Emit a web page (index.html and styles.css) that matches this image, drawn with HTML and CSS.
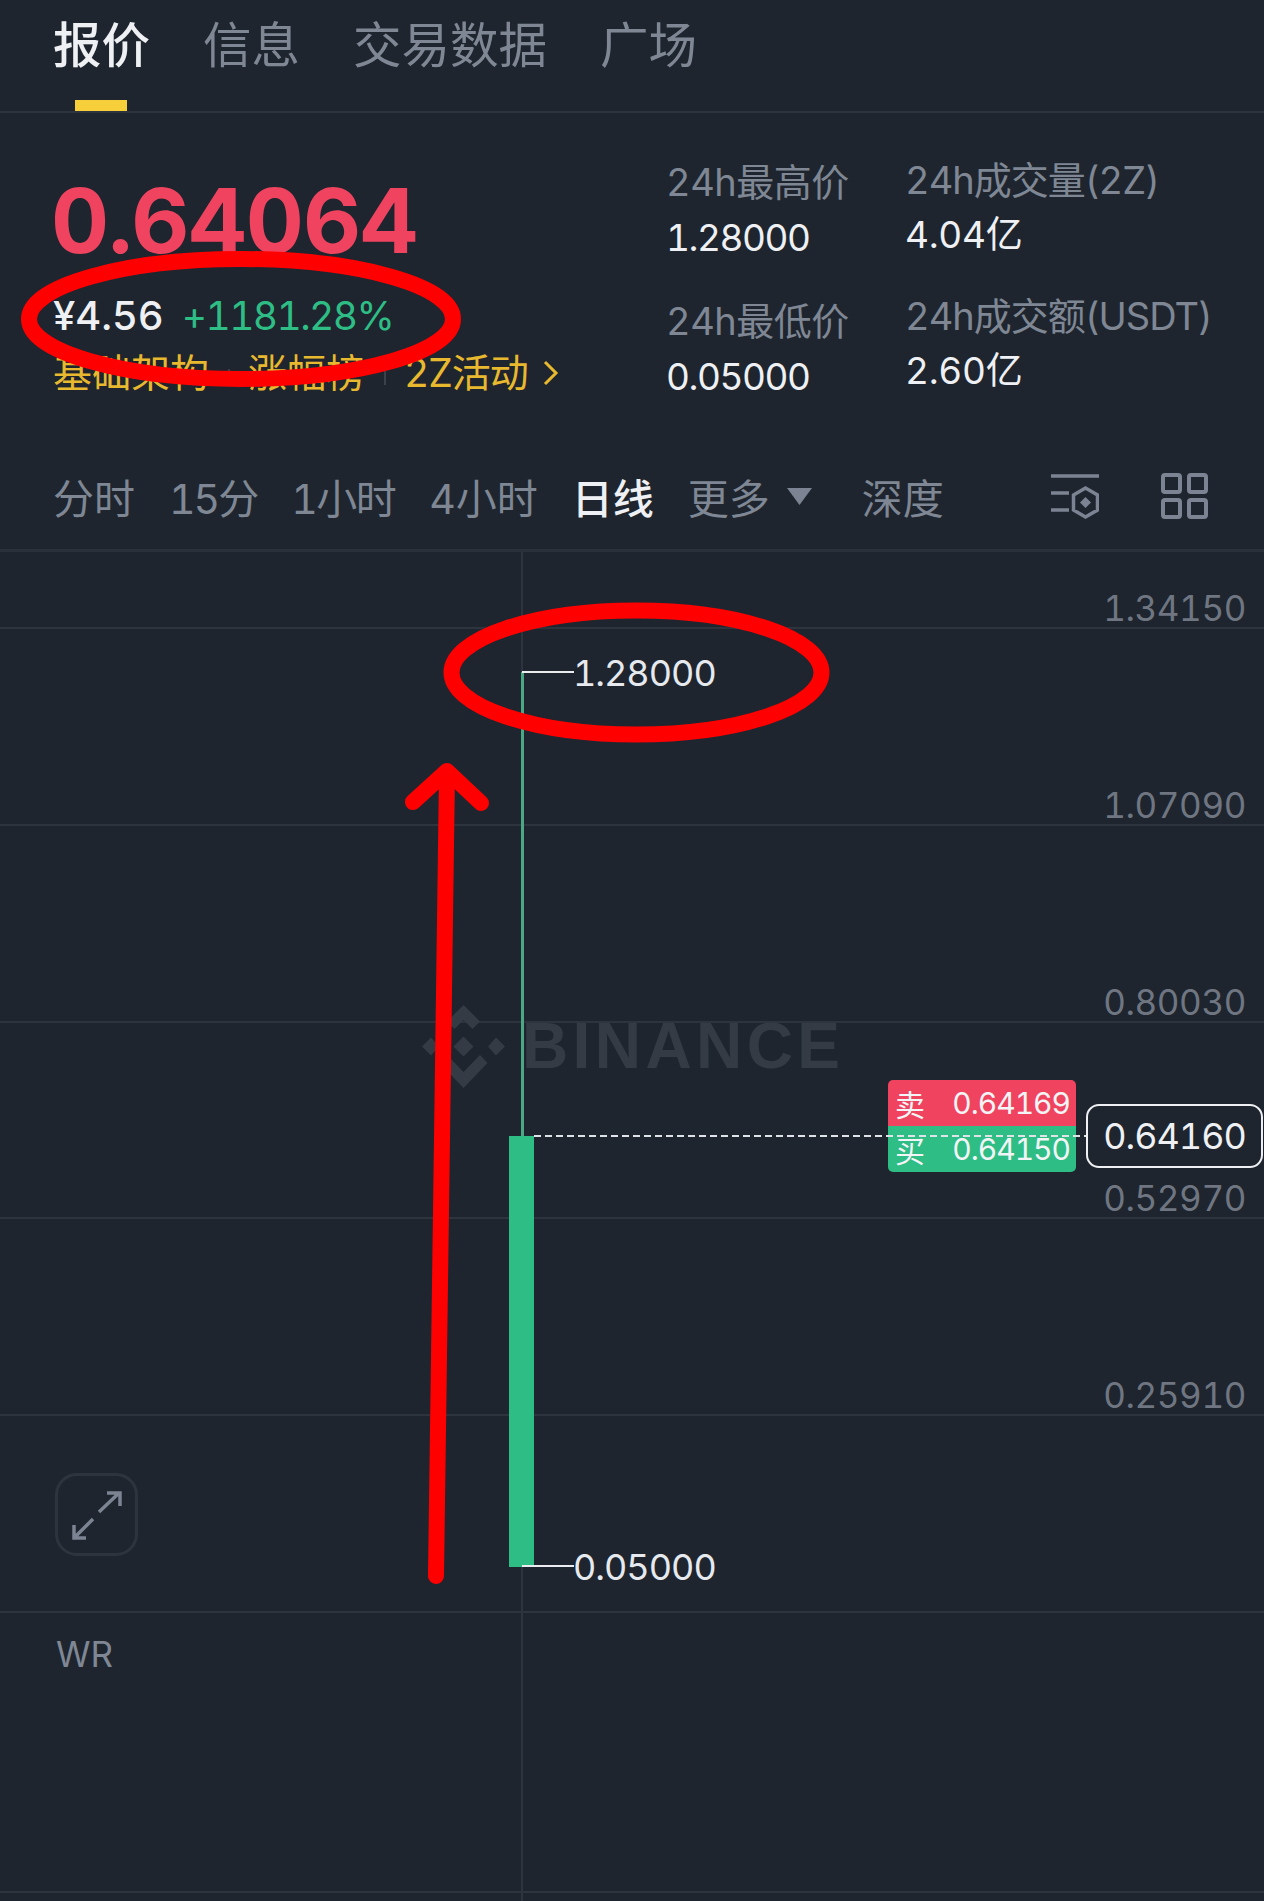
FILE: index.html
```html
<!DOCTYPE html>
<html lang="zh-CN">
<head>
<meta charset="utf-8">
<title>ZZ/USDT</title>
<link rel="stylesheet" href="styles.css">
</head>
<body>
<main class="page">
  <nav class="tabs">
    <a class="tab tab-active">报价</a>
    <a class="tab">信息</a>
    <a class="tab">交易数据</a>
    <a class="tab">广场</a>
  </nav>

  <section class="quote">
    <div class="quote-main">
      <div class="price">0.64064</div>
      <div class="sub"><span class="cny">¥4.56</span><span class="change">+1181.28%</span></div>
      <div class="links">
        <span>基础架构</span><i class="sep"></i><span>涨幅榜</span><i class="sep"></i><span class="link-2z">2Z活动</span>
        <svg class="chev" width="16" height="26" viewBox="0 0 16 26"><path d="M2 2l11 11L2 24" fill="none" stroke="#e8b92f" stroke-width="3"/></svg>
      </div>
    </div>
    <div class="stats stats-a">
      <div class="stat"><div class="stat-label">24h最高价</div><div class="stat-value">1.28000</div></div>
      <div class="stat"><div class="stat-label">24h最低价</div><div class="stat-value">0.05000</div></div>
    </div>
    <div class="stats stats-b">
      <div class="stat"><div class="stat-label">24h成交量(2Z)</div><div class="stat-value">4.04亿</div></div>
      <div class="stat"><div class="stat-label">24h成交额(USDT)</div><div class="stat-value">2.60亿</div></div>
    </div>
  </section>

  <div class="toolbar">
    <span class="tf">分时</span>
    <span class="tf tf-15">15分</span>
    <span class="tf tf-1h">1小时</span>
    <span class="tf">4小时</span>
    <span class="tf tf-active">日线</span>
    <span class="tf tf-more">更多<svg class="caret" width="25" height="17" viewBox="0 0 25 17"><path d="M0 0h25L12.500 17z" fill="#7c8494"/></svg></span>
    <span class="tf">深度</span>
    <span class="tools">
      <svg class="tool" width="48" height="46" viewBox="0 0 48 46" fill="none" stroke="#7c8494" stroke-width="3.500"><path d="M0 3h48M0 20h18M0 37h18"/><path d="M34.500 15l12 7v15l-12 7-12-7V22z"/><path d="M34.500 24l5.500 5.500-5.500 5.500-5.500-5.500z" fill="#7c8494" stroke="none"/></svg>
      <svg class="tool" width="47" height="46" viewBox="0 0 47 46" fill="none" stroke="#7c8494" stroke-width="4"><rect x="2" y="2" width="17" height="17" rx="2"/><rect x="28" y="2" width="17" height="17" rx="2"/><rect x="2" y="27" width="17" height="17" rx="2"/><rect x="28" y="27" width="17" height="17" rx="2"/></svg>
    </span>
  </div>

  <section class="chart">
    <div class="rows">
      <div class="row row-first"><span class="axis">1.34150</span></div>
      <div class="row"><span class="axis">1.07090</span></div>
      <div class="row"><span class="axis">0.80030</span></div>
      <div class="row"><span class="axis">0.52970</span></div>
      <div class="row"><span class="axis">0.25910</span></div>
      <div class="row"></div>
      <div class="row row-last"><span class="wr">WR</span></div>
    </div>

    <div class="crossline"></div>

    <div class="watermark">
      <svg width="83" height="83" viewBox="0 0 83 83" fill="#343b45"><path d="M41.500 0L58 16.500 50.500 24 41.500 15 32.500 24 25 16.500zM9 32.500l8 9-8 9-9-9zM74 32.500l9 9-9 9-8-9zM41.500 31.500l10 10-10 10-10-10zM25 50l16.500 17L58 50l7.500 8L41.500 83 17.500 58z"/></svg>
      <span class="wm-text">BINANCE</span>
    </div>

    <div class="wick"></div>
    <div class="candle"></div>
    <div class="lead lead-high"></div>
    <div class="extreme extreme-high">1.28000</div>
    <div class="lead lead-low"></div>
    <div class="extreme extreme-low">0.05000</div>

    <div class="book">
      <div class="book-row book-sell"><span>卖</span><span>0.64169</span></div>
      <div class="book-row book-buy"><span>买</span><span>0.64150</span></div>
    </div>
    <div class="dash"></div>
    <div class="last">0.64160</div>

    <div class="expand">
      <svg width="50" height="50" viewBox="0 0 50 50" fill="none" stroke="#7c8494" stroke-width="3.500"><path d="M27 22L47 3M35 3h13v13"/><path d="M21 29L2 48M14 48H2V35"/></svg>
    </div>
  </section>

  <svg class="marks" width="1264" height="1901" viewBox="0 0 1264 1901" fill="none" stroke="#ff0000" stroke-width="16" stroke-linecap="round" stroke-linejoin="round">
    <ellipse cx="241" cy="319" rx="212" ry="60"/>
    <ellipse cx="636.500" cy="672.500" rx="185" ry="62"/>
    <path d="M436 1576L447 773"/>
    <path d="M413 802L447 771 481 803"/>
  </svg>
</main>
</body>
</html>
```

FILE: styles.css
```css
* { box-sizing: border-box; }
html, body { margin: 0; padding: 0; }
body {
  width: 1264px;
  height: 1901px;
  overflow: hidden;
  background: #1e252e;
  color: #eaecef;
  font-family: Inter, "Noto Sans CJK SC", sans-serif;
  font-variant-numeric: tabular-nums;
}
.page { position: relative; width: 1264px; height: 1901px; overflow: hidden; }

/* tabs */
.tabs {
  display: flex;
  gap: 53px;
  height: 113px;
  padding: 18px 0 0 53px;
  border-bottom: 2px solid #2d343e;
  font-size: 48.500px;
  line-height: 56px;
}
.tab { color: #7f8794; position: relative; height: 93px; }
.tab-active { color: #eef0f3; font-weight: 500; }
.tab-active::after {
  content: "";
  position: absolute;
  left: 22px;
  top: 82px;
  width: 52px;
  height: 11px;
  background: #f6cf3a;
}

/* quote */
.quote { display: flex; height: 327px; padding: 0 0 0 53px; }
.quote-main { width: 613px; padding-top: 63px; }
.price {
  font-size: 90px;
  font-weight: 700;
  line-height: 90px;
  color: #f0435f;
  letter-spacing: -1px;
  margin-left: -2px;
}
.sub { display: flex; gap: 18px; align-items: baseline; margin-top: 26px; font-size: 39px; line-height: 48px; }
.cny { color: #eef0f3; font-weight: 500; font-size: 40px; }
.change { color: #2ebd85; letter-spacing: -1.600px; }
.links { display: flex; align-items: center; margin-top: 8px; font-size: 39px; line-height: 50px; color: #e8b92f; }
.sep { display: block; width: 2px; height: 16px; margin: 8px 18.500px 0; background: #3a414b; }
.link-2z { letter-spacing: -1px; }
.chev { margin-left: 15px; }

.stats { display: flex; flex-direction: column; }
.stats-a { width: 239px; padding-top: 46px; gap: 37px; }
.stats-b { padding-top: 44px; gap: 35px; }
.stat-label { font-size: 38px; line-height: 46px; color: #7f8794; white-space: nowrap; }
.stat-value { font-size: 37px; line-height: 46px; margin-top: 10px; color: #eef0f3; }
.stats-a .stat-label { letter-spacing: -0.500px; }
.stats-a .stat-value { letter-spacing: -1.500px; }
.stats-b .stat-label { letter-spacing: -1px; }
.stats-b .stat-value { letter-spacing: -0.300px; margin-top: 9px; }

/* toolbar */
.toolbar {
  display: flex;
  align-items: center;
  height: 112px;
  padding: 3px 0 0 53px;
  border-bottom: 3px solid #2a313b;
  font-size: 41px;
  color: #7f8794;
}
.tf { margin-right: 34px; white-space: nowrap; }
.tf-15 { letter-spacing: -2px; }
.tf-1h { letter-spacing: -1.500px; }
.tf-active { color: #eef0f3; font-weight: 500; }
.tf-more { display: flex; align-items: center; margin-right: 50px; }
.caret { margin-left: 17px; }
.tools { display: flex; gap: 62px; margin-left: 73px; }

/* chart */
.chart { position: relative; height: 1349px; }
.rows { display: flex; flex-direction: column; }
.row {
  display: flex;
  justify-content: flex-end;
  align-items: flex-end;
  height: 196.800px;
  padding: 0 18px 2px 56px;
  border-bottom: 2px solid #2d343e;
}
.row-first { height: 77px; }
.row-last { height: 280px; justify-content: flex-start; align-items: flex-start; }
.axis { font-size: 35px; line-height: 34px; letter-spacing: -0.400px; color: #6f7682; }
.wr { font-size: 35px; line-height: 44px; margin-top: 19px; color: #7f8794; }

.crossline { position: absolute; left: 521px; top: 0; bottom: 0; width: 2px; background: #2d343e; }

.watermark { position: absolute; left: 422px; top: 453px; display: flex; align-items: center; gap: 17px; }
.wm-text { font-family: "Liberation Sans", sans-serif; font-size: 64px; font-weight: 700; line-height: 83px; letter-spacing: 4.400px; color: #343b45; }

.wick { position: absolute; left: 521px; top: 120px; width: 2.500px; height: 464px; background: #4aa985; }
.candle { position: absolute; left: 509px; top: 584px; width: 25px; height: 431px; background: #2ebd85; }
.lead { position: absolute; left: 522px; width: 52px; height: 2px; background: #eaecef; }
.lead-high { top: 119px; }
.lead-low { top: 1013px; }
.extreme { position: absolute; left: 573px; font-size: 36px; line-height: 44px; letter-spacing: -1px; color: #e6e9ee; }
.extreme-high { top: 99px; }
.extreme-low { top: 993px; }

.dash {
  position: absolute;
  left: 534px;
  top: 583px;
  width: 554px;
  height: 2px;
  background: repeating-linear-gradient(90deg, #dfe3e8 0 7px, transparent 7px 11px);
}
.book { position: absolute; left: 888px; top: 528px; width: 188px; border-radius: 5px; overflow: hidden; font-size: 30px; letter-spacing: -1px; color: #f2f4f6; }
.book-row { display: flex; justify-content: space-between; align-items: center; height: 46px; padding: 0 6px 0 7px; }
.book-sell { background: #f0435f; }
.book-buy { background: #2ebd85; }
.last {
  position: absolute;
  left: 1086px;
  top: 552px;
  width: 177px;
  height: 64px;
  border: 2px solid #eef0f3;
  border-radius: 13px;
  background: #1e252e;
  text-align: center;
  font-size: 36px;
  line-height: 60px;
  letter-spacing: -1px;
  color: #eef0f3;
}
.expand {
  position: absolute;
  left: 55px;
  top: 921px;
  width: 83px;
  height: 83px;
  border: 3px solid #2d343e;
  border-radius: 22px;
  display: flex;
  align-items: center;
  justify-content: center;
}

.marks { position: absolute; left: 0; top: 0; pointer-events: none; }
```
